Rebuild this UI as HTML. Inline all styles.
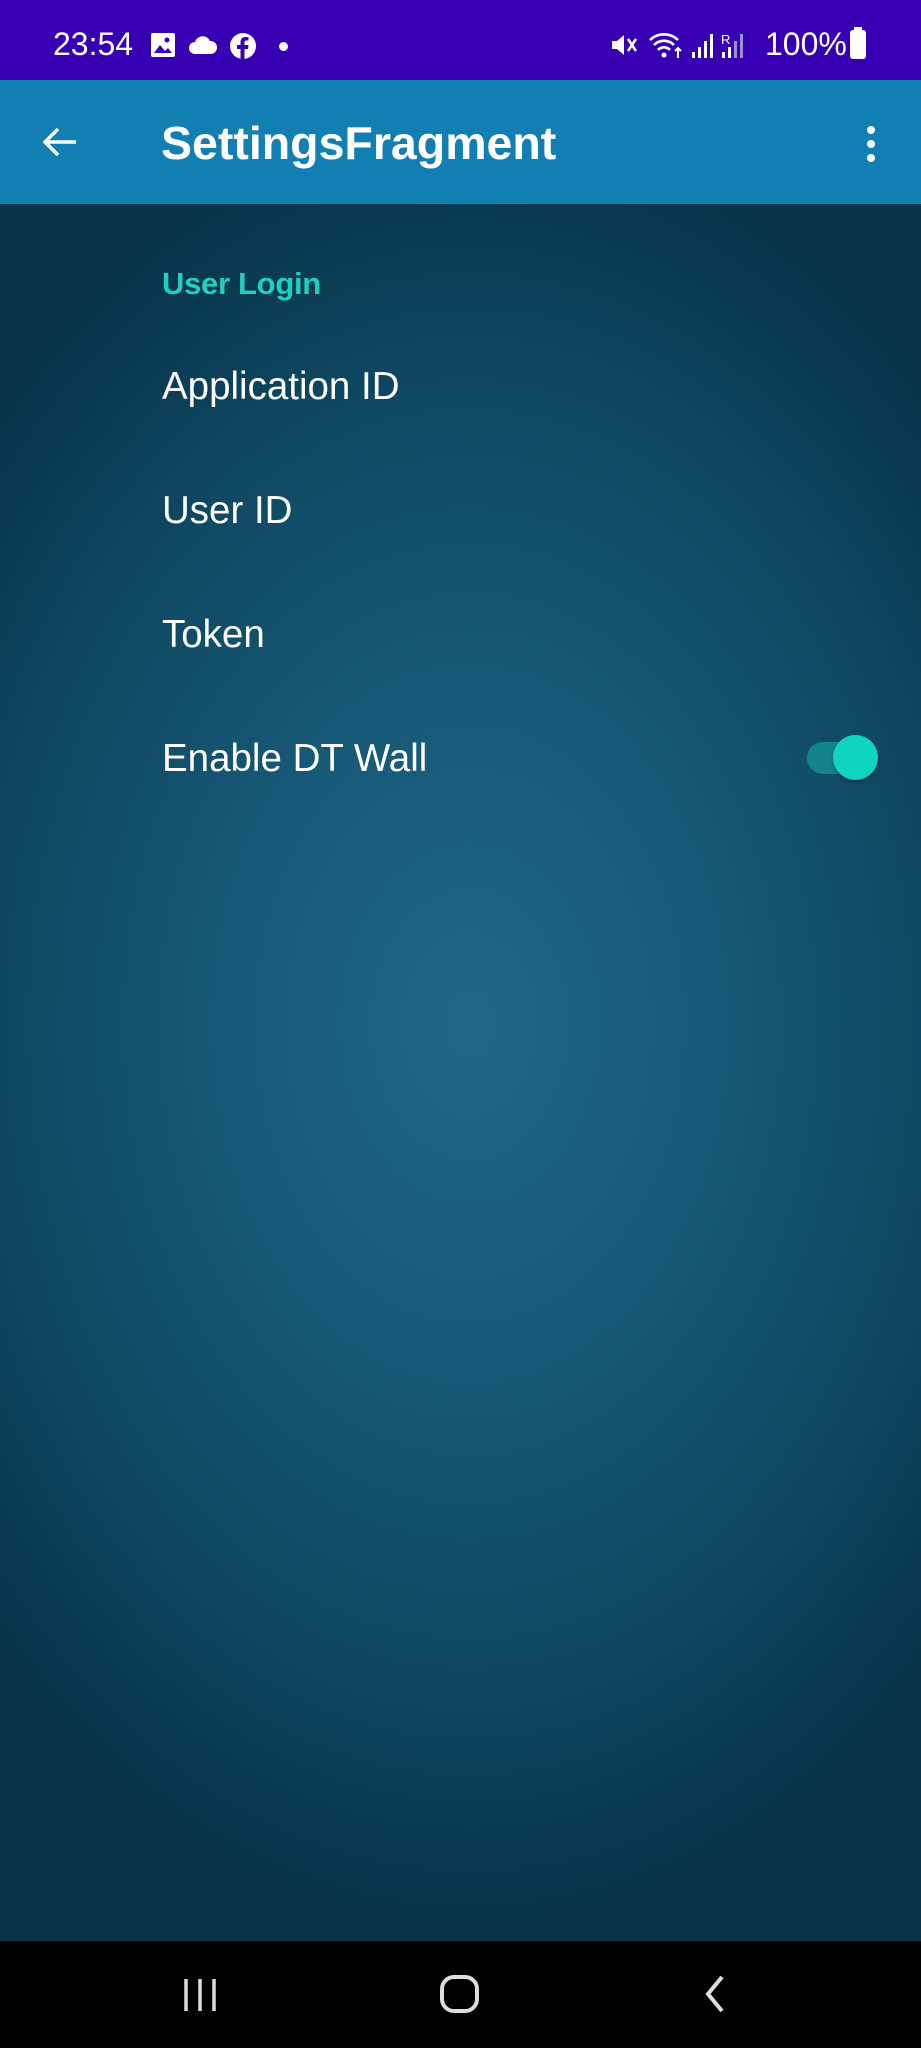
<!DOCTYPE html>
<html><head><meta charset="utf-8"><style>
*{margin:0;padding:0;box-sizing:border-box}
body{width:921px;height:2048px;overflow:hidden;font-family:"Liberation Sans",sans-serif;position:relative;background:#0b3a52}
.sb{position:absolute;top:0;left:0;width:921px;height:80px;background:#3700b3;color:#fff}
.ab{position:absolute;top:80px;left:0;width:921px;height:124px;background:#117fb2;color:#fff}
.main{position:absolute;top:204px;left:0;width:921px;height:1737px;background:radial-gradient(ellipse 650px 900px at 470px 820px,#1f6985 0%,#175a78 35%,#0f4863 70%,#08334a 100%)}
.nav{position:absolute;top:1941px;left:0;width:921px;height:107px;background:#000}
.t{position:absolute;left:162px;color:#fff;font-size:38.5px}
</style></head><body>
<div class="sb">
<div style="position:absolute;left:53px;top:26px;font-size:32px">23:54</div>
<svg style="position:absolute;left:150px;top:32px" width="26" height="26" viewBox="0 0 26 26"><rect x="1" y="1" width="24" height="24" rx="2" fill="#fff"/><path d="M4 21l6-8 5 6 3-3 4 5z" fill="#3700b3"/><circle cx="17" cy="8" r="2.5" fill="#3700b3"/></svg>
<svg style="position:absolute;left:188px;top:34px" width="30" height="20" viewBox="0 0 30 20"><path d="M7 20a6 6 0 0 1 0-12a8 8 0 0 1 15-1a6.5 6.5 0 0 1 1 13z" fill="#fff"/></svg>
<svg style="position:absolute;left:229px;top:32px" width="28" height="28" viewBox="0 0 28 28"><circle cx="14" cy="14" r="13" fill="#fff"/><path d="M15.5 28V17h3.5l.5-4h-4v-2.5c0-1.2.4-2 2-2h2V5.2c-.4 0-1.6-.2-3-.2-3 0-5 1.8-5 5.1V13H8v4h3.5v11z" fill="#3700b3"/></svg>
<div style="position:absolute;left:279px;top:42px;width:9px;height:9px;border-radius:50%;background:#fff"></div>
<svg style="position:absolute;left:610px;top:30px" width="30" height="30" viewBox="0 0 30 30"><path d="M2 11h5l7-6v20l-7-6H2z" fill="#fff"/><path d="M18 9l8 12M26 9l-8 12" stroke="#fff" stroke-width="2.5"/></svg>
<svg style="position:absolute;left:648px;top:30px" width="36" height="30" viewBox="0 0 36 30"><path d="M2 10a20 20 0 0 1 28 0M6 15a14 14 0 0 1 20 0M10 20a8 8 0 0 1 12 0" stroke="#fff" stroke-width="2.6" fill="none"/><circle cx="16" cy="25" r="2.5" fill="#fff"/><path d="M30 18v10M27 21l3-3 3 3" stroke="#fff" stroke-width="2" fill="none"/></svg>
<svg style="position:absolute;left:690px;top:30px" width="68" height="30" viewBox="0 0 68 30"><rect x="2" y="22" width="3" height="6" fill="#fff"/><rect x="8" y="17" width="3" height="11" fill="#fff"/><rect x="14" y="11" width="3" height="17" fill="#fff"/><rect x="20" y="4" width="3" height="24" fill="#fff"/><text x="31" y="14" font-size="13" fill="#fff" font-family="Liberation Sans">R</text><rect x="32" y="22" width="3" height="6" fill="#fff"/><rect x="38" y="17" width="3" height="11" fill="#fff"/><rect x="44" y="11" width="3" height="17" fill="#9c8fd8"/><rect x="50" y="4" width="3" height="24" fill="#9c8fd8"/></svg>
<div style="position:absolute;left:765px;top:26px;font-size:32px">100%</div>
<div style="position:absolute;left:850px;top:30px;width:16px;height:29px;border-radius:3px;background:#fff"></div>
<div style="position:absolute;left:854px;top:27px;width:8px;height:4px;background:#fff"></div>
</div>
<div class="ab">
<svg style="position:absolute;left:40px;top:42px" width="40" height="40" viewBox="0 0 40 40"><path d="M36 20H6M18 7L5 20l13 13" stroke="#fff" stroke-width="3.5" fill="none"/></svg>
<div style="position:absolute;left:161px;top:36px;font-size:46.5px;font-weight:bold">SettingsFragment</div>
<div style="position:absolute;left:867px;top:46px;width:8px;height:8px;border-radius:50%;background:#fff;box-shadow:0 14px 0 #fff,0 28px 0 #fff"></div>
</div>
<div class="main">
<div class="t" style="top:62px;font-size:31px;color:#1fd0bd;font-weight:bold;letter-spacing:-0.3px">User Login</div>
<div class="t" style="top:161px">Application ID</div>
<div class="t" style="top:285px">User ID</div>
<div class="t" style="top:409px">Token</div>
<div class="t" style="top:533px">Enable DT Wall</div>
<div style="position:absolute;left:807px;top:538px;width:60px;height:32px;border-radius:16px;background:#138489"></div>
<div style="position:absolute;left:833px;top:531px;width:45px;height:45px;border-radius:50%;background:#0fd5c0;box-shadow:0 2px 3px rgba(0,0,0,.3)"></div>
</div>
<div class="nav">
<svg style="position:absolute;left:180px;top:34px" width="40" height="40" viewBox="0 0 40 40"><path d="M6 4v32M20 4v32M34 4v32" stroke="#ddd" stroke-width="3.5"/></svg>
<div style="position:absolute;left:440px;top:34px;width:39px;height:38px;border:4px solid #ddd;border-radius:14px"></div>
<svg style="position:absolute;left:700px;top:32px" width="30" height="42" viewBox="0 0 30 42"><path d="M22 4L8 21l14 17" stroke="#ddd" stroke-width="4" fill="none"/></svg>
</div>
</body></html>
